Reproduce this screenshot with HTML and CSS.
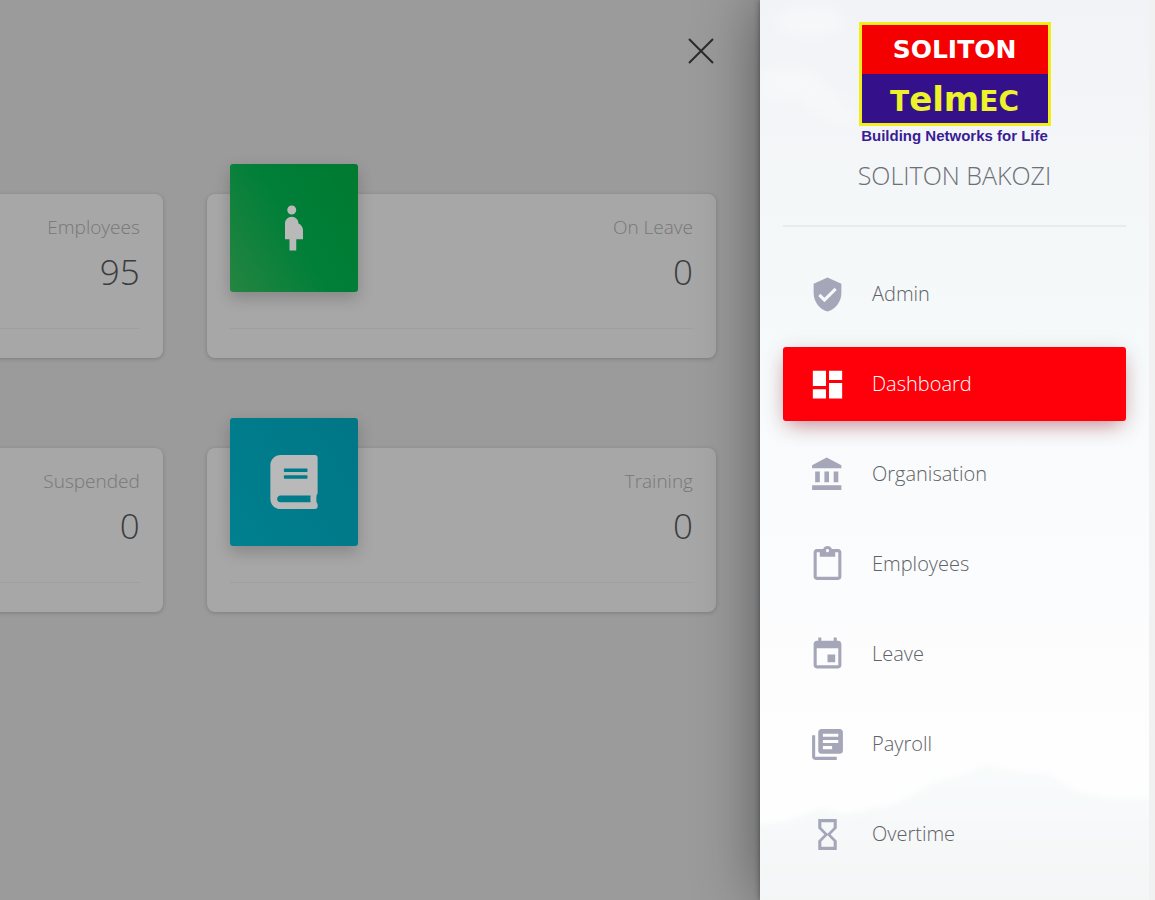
FILE: index.html
```html
<!DOCTYPE html>
<html lang="en">
<head>
    <meta charset="UTF-8">
    <meta name="viewport" content="width=device-width, initial-scale=1.0">
    <title>Soliton Bakozi</title>
    <link rel="stylesheet" href="styles.css">
</head>
<body>
    <div class="wrapper">
        <main class="main-panel">
            <div class="topbar">
                <button type="button" class="btn-close" aria-label="Close menu">
                    <svg viewBox="0 0 26 26"><path d="M1 1l24 24M25 1L1 25"/></svg>
                </button>
            </div>
            <div class="stats">
                <section class="card">
                    <div class="card-header">
                        <div class="card-text">
                            <p class="card-category">Employees</p>
                            <h3 class="card-title">95</h3>
                        </div>
                    </div>
                    <div class="card-footer"></div>
                </section>
                <section class="card">
                    <div class="card-header">
                        <div class="card-icon card-icon-success">
                            <svg viewBox="0 0 24 24" width="54" height="54"><path d="M9 4c0-1.11.89-2 2-2s2 .89 2 2-.89 2-2 2-2-.89-2-2zm7 9c-.01-1.34-.83-2.51-2-3 0-1.66-1.34-3-3-3s-3 1.34-3 3v7h2v5h3v-5h3v-4z"/></svg>
                        </div>
                        <div class="card-text">
                            <p class="card-category">On Leave</p>
                            <h3 class="card-title">0</h3>
                        </div>
                    </div>
                    <div class="card-footer"></div>
                </section>
                <section class="card">
                    <div class="card-header">
                        <div class="card-text">
                            <p class="card-category">Suspended</p>
                            <h3 class="card-title">0</h3>
                        </div>
                    </div>
                    <div class="card-footer"></div>
                </section>
                <section class="card">
                    <div class="card-header">
                        <div class="card-icon card-icon-info">
                            <svg viewBox="0 0 448 512" width="48" height="54"><path d="M448 360V24c0-13.3-10.7-24-24-24H96C43 0 0 43 0 96v320c0 53 43 96 96 96h328c13.3 0 24-10.7 24-24v-16c0-7.5-3.5-14.3-8.9-18.7-4.2-15.4-4.2-59.3 0-74.7 5.4-4.3 8.9-11.1 8.9-18.6zM128 134c0-3.3 2.7-6 6-6h212c3.3 0 6 2.7 6 6v20c0 3.3-2.7 6-6 6H134c-3.3 0-6-2.7-6-6v-20zm0 64c0-3.3 2.7-6 6-6h212c3.3 0 6 2.7 6 6v20c0 3.3-2.7 6-6 6H134c-3.3 0-6-2.7-6-6v-20zm253.4 250H96c-17.7 0-32-14.3-32-32 0-17.6 14.4-32 32-32h285.4c-1.9 17.1-1.9 46.9 0 64z"/></svg>
                        </div>
                        <div class="card-text">
                            <p class="card-category">Training</p>
                            <h3 class="card-title">0</h3>
                        </div>
                    </div>
                    <div class="card-footer"></div>
                </section>
            </div>
        </main>

        <aside class="sidebar">
            <!-- faint clouds and hills behind the menu -->
            <svg class="sidebar-bg" viewBox="0 0 389 900" preserveAspectRatio="none" aria-hidden="true">
                <defs>
                    <filter id="soft" x="-20%" y="-20%" width="140%" height="140%"><feGaussianBlur stdDeviation="7"/></filter>
                    <filter id="haze" x="-5%" y="-5%" width="110%" height="110%"><feGaussianBlur stdDeviation="3"/></filter>
                    <linearGradient id="hill" x1="0" y1="0" x2="0" y2="1">
                        <stop offset="0" stop-color="#f9fbfb"/>
                        <stop offset="1" stop-color="#f3f5f6"/>
                    </linearGradient>
                </defs>
                <g filter="url(#soft)" fill="#f7f8fa">
                    <ellipse cx="50" cy="22" rx="34" ry="14"/>
                    <path d="M0 70l50 0 46 50-20 2-40-24-36 0z"/>
                </g>
                <path filter="url(#haze)" fill="url(#hill)" d="M-10 824l35-2 35-14 25 6 50-10 40-22 30-8 22-10 32 8 32 2 22 16 34 8 60 0V920H-10z"/>
            </svg>
            <div class="logo">
                <a href="#" class="logo-mark">
                    <span class="logo-box">
                        <span class="logo-top">SOLITON</span>
                        <span class="logo-bottom"><span class="logo-cap">T</span>elm<span class="logo-cap">EC</span></span>
                    </span>
                    <span class="logo-tagline">Building Networks for Life</span>
                </a>
                <a href="#" class="logo-name">SOLITON BAKOZI</a>
            </div>
            <nav class="nav">
                <a href="#" class="nav-link">
                    <svg viewBox="0 0 24 24"><path d="M12 1L3 5v6c0 5.55 3.84 10.74 9 12 5.16-1.26 9-6.45 9-12V5l-9-4zm-2 16l-4-4 1.41-1.41L10 14.17l6.59-6.59L18 9l-8 8z"/></svg>
                    <span>Admin</span>
                </a>
                <a href="#" class="nav-link active">
                    <svg viewBox="0 0 24 24"><path d="M2.500 13h8.500V3H2.500v10zm0 8h8.500v-6H2.500v6zm10.500 0h8.500V11H13v10zm0-18v6h8.500V3H13z"/></svg>
                    <span>Dashboard</span>
                </a>
                <a href="#" class="nav-link">
                    <svg viewBox="0 0 24 24"><path d="M4 10v7h3v-7H4zm6 0v7h3v-7h-3zM2 22h19v-3H2v3zm14-12v7h3v-7h-3zm-4.500-9L2 6v2h19V6l-9.500-5z"/></svg>
                    <span>Organisation</span>
                </a>
                <a href="#" class="nav-link">
                    <svg viewBox="0 0 24 24"><path d="M19 2h-4.180C14.400.84 13.300 0 12 0c-1.300 0-2.400.84-2.820 2H5c-1.100 0-2 .9-2 2v16c0 1.100.9 2 2 2h14c1.100 0 2-.9 2-2V4c0-1.100-.9-2-2-2zm-7 0c.55 0 1 .45 1 1s-.45 1-1 1-1-.45-1-1 .45-1 1-1zm7 18H5V4h2v3h10V4h2v16z"/></svg>
                    <span>Employees</span>
                </a>
                <a href="#" class="nav-link">
                    <svg viewBox="0 0 24 24"><path d="M17 12h-5v5h5v-5zM16 1v2H8V1H6v2H5c-1.110 0-1.990.9-1.990 2L3 19c0 1.100.89 2 2 2h14c1.100 0 2-.9 2-2V5c0-1.100-.9-2-2-2h-1V1h-2zm3 18H5V8h14v11z"/></svg>
                    <span>Leave</span>
                </a>
                <a href="#" class="nav-link">
                    <svg viewBox="0 0 24 24"><path d="M4 6H2v14c0 1.100.9 2 2 2h14v-2H4V6zm16-4H8c-1.100 0-2 .9-2 2v12c0 1.100.9 2 2 2h12c1.100 0 2-.9 2-2V4c0-1.100-.9-2-2-2zm-1 9H9V9h10v2zm-4 4H9v-2h6v2zm4-8H9V5h10v2z"/></svg>
                    <span>Payroll</span>
                </a>
                <a href="#" class="nav-link">
                    <svg viewBox="0 0 24 24"><path d="M6 2v6h.01L6 8.010 10 12l-4 4 .01.01H6V22h12v-5.990h-.01L18 16l-4-4 4-3.990-.01-.01H18V2H6zm10 14.500V20H8v-3.500l4-4 4 4zm-4-5l-4-4V4h8v3.500l-4 4z"/></svg>
                    <span>Overtime</span>
                </a>
            </nav>
        </aside>
    </div>
</body>
</html>
```

FILE: styles.css
```css
* {
    box-sizing: border-box;
}

body {
    margin: 0;
    background-color: #9b9b9b;
    font-family: "Open Sans", "Noto Sans", sans-serif;
    font-weight: 300;
    font-size: 20px;
    line-height: 30px;
}

a {
    text-decoration: none;
}

.wrapper {
    display: flex;
    min-height: 100vh;
}

/* dimmed page */
.main-panel {
    flex: 1;
    min-width: 0;
    padding: 0 44px 0 46px;
    overflow: hidden;
}

.topbar {
    display: flex;
    justify-content: flex-end;
    padding: 38px 0 130px;
}

.btn-close {
    width: 28px;
    height: 26px;
    padding: 0 2px 0 0;
    border: 0;
    background: none;
    cursor: pointer;
}

.btn-close svg {
    display: block;
    fill: none;
    stroke: #2b2b2b;
    stroke-width: 2;
}

.stats {
    display: grid;
    grid-template-columns: 76% 76%;
    justify-content: end;
    gap: 90px 44px;
}

.card {
    padding: 0 23px;
    border-radius: 8px;
    background-color: #a7a7a7;
    box-shadow: 0 1px 4px rgba(0, 0, 0, 0.2);
}

.card-header {
    display: flex;
    height: 134px;
}

.card-icon {
    display: flex;
    align-items: center;
    justify-content: center;
    width: 128px;
    height: 128px;
    margin-top: -30px;
    border-radius: 3px;
    box-shadow: 0 6px 16px rgba(0, 0, 0, 0.2);
}

.card-icon svg {
    fill: #b9b9b9;
}

.card-icon-success {
    background: linear-gradient(60deg, #258541, #007f39 50%, #007a2f);
}

.card-icon-info {
    background: linear-gradient(60deg, #008090, #007685);
}

.card-text {
    flex: 1;
    padding-top: 18px;
    text-align: right;
}

.card-category {
    margin: 0;
    color: #777777;
    font-size: 19px;
}

.card-title {
    margin: 8px 0 0;
    color: #3a3d40;
    font-size: 35px;
    font-weight: 300;
    line-height: 44px;
}

.card-footer {
    height: 30px;
    border-top: 1px solid #9f9f9f;
}

/* sidebar */
.sidebar {
    position: relative;
    width: 395px;
    padding: 0 23px;
    border-right: 6px solid #f1f1f2;
    background: linear-gradient(#f1f3f6, #f6f9fa 35%, #fdfdfe 75%, #ffffff);
    box-shadow: 0 0 60px rgba(0, 0, 0, 0.45), 0 0 6px rgba(0, 0, 0, 0.4);
}

.sidebar-bg {
    position: absolute;
    inset: 0;
    width: 100%;
    height: 100%;
}

.logo {
    position: relative;
    display: flex;
    flex-direction: column;
    align-items: center;
    padding: 22px 0 34px;
    border-bottom: 2px solid #e8eaed;
}

.logo-mark {
    display: flex;
    flex-direction: column;
    align-items: center;
    font-family: "Liberation Sans", Arial, sans-serif;
    font-weight: 700;
}

.logo-box {
    width: 192px;
    border: 3px solid #f2ee1c;
    background-color: #34108a;
    font-family: "DejaVu Sans", Verdana, sans-serif;
    text-align: center;
}

.logo-top,
.logo-bottom {
    display: block;
    height: 49px;
    line-height: 50px;
}

.logo-top {
    background-color: #f50000;
    color: #ffffff;
    font-size: 25px;
}

.logo-bottom {
    color: #eef22a;
    font-size: 34px;
}

.logo-cap {
    font-size: 28px;
}

.logo-tagline {
    color: #3a1c96;
    font-size: 15px;
    line-height: 20px;
}

.logo-name {
    margin-top: 13px;
    color: #6c7075;
    font-size: 25px;
    line-height: 32px;
}

.nav {
    position: relative;
    display: flex;
    flex-direction: column;
    gap: 16px;
    padding: 30px 0 28px;
}

.nav-link {
    display: flex;
    align-items: center;
    gap: 26px;
    height: 74px;
    padding: 0 26px;
    border-radius: 3px;
    color: #5f6266;
}

.nav-link svg {
    width: 37px;
    height: 37px;
    fill: #a5a6b8;
}

.nav-link.active {
    background-color: #ff000a;
    box-shadow: 0 8px 20px -6px rgba(180, 30, 50, 0.5), 0 4px 24px rgba(0, 0, 0, 0.1);
    color: #ffffff;
}

.nav-link.active svg {
    fill: #ffffff;
}
```
